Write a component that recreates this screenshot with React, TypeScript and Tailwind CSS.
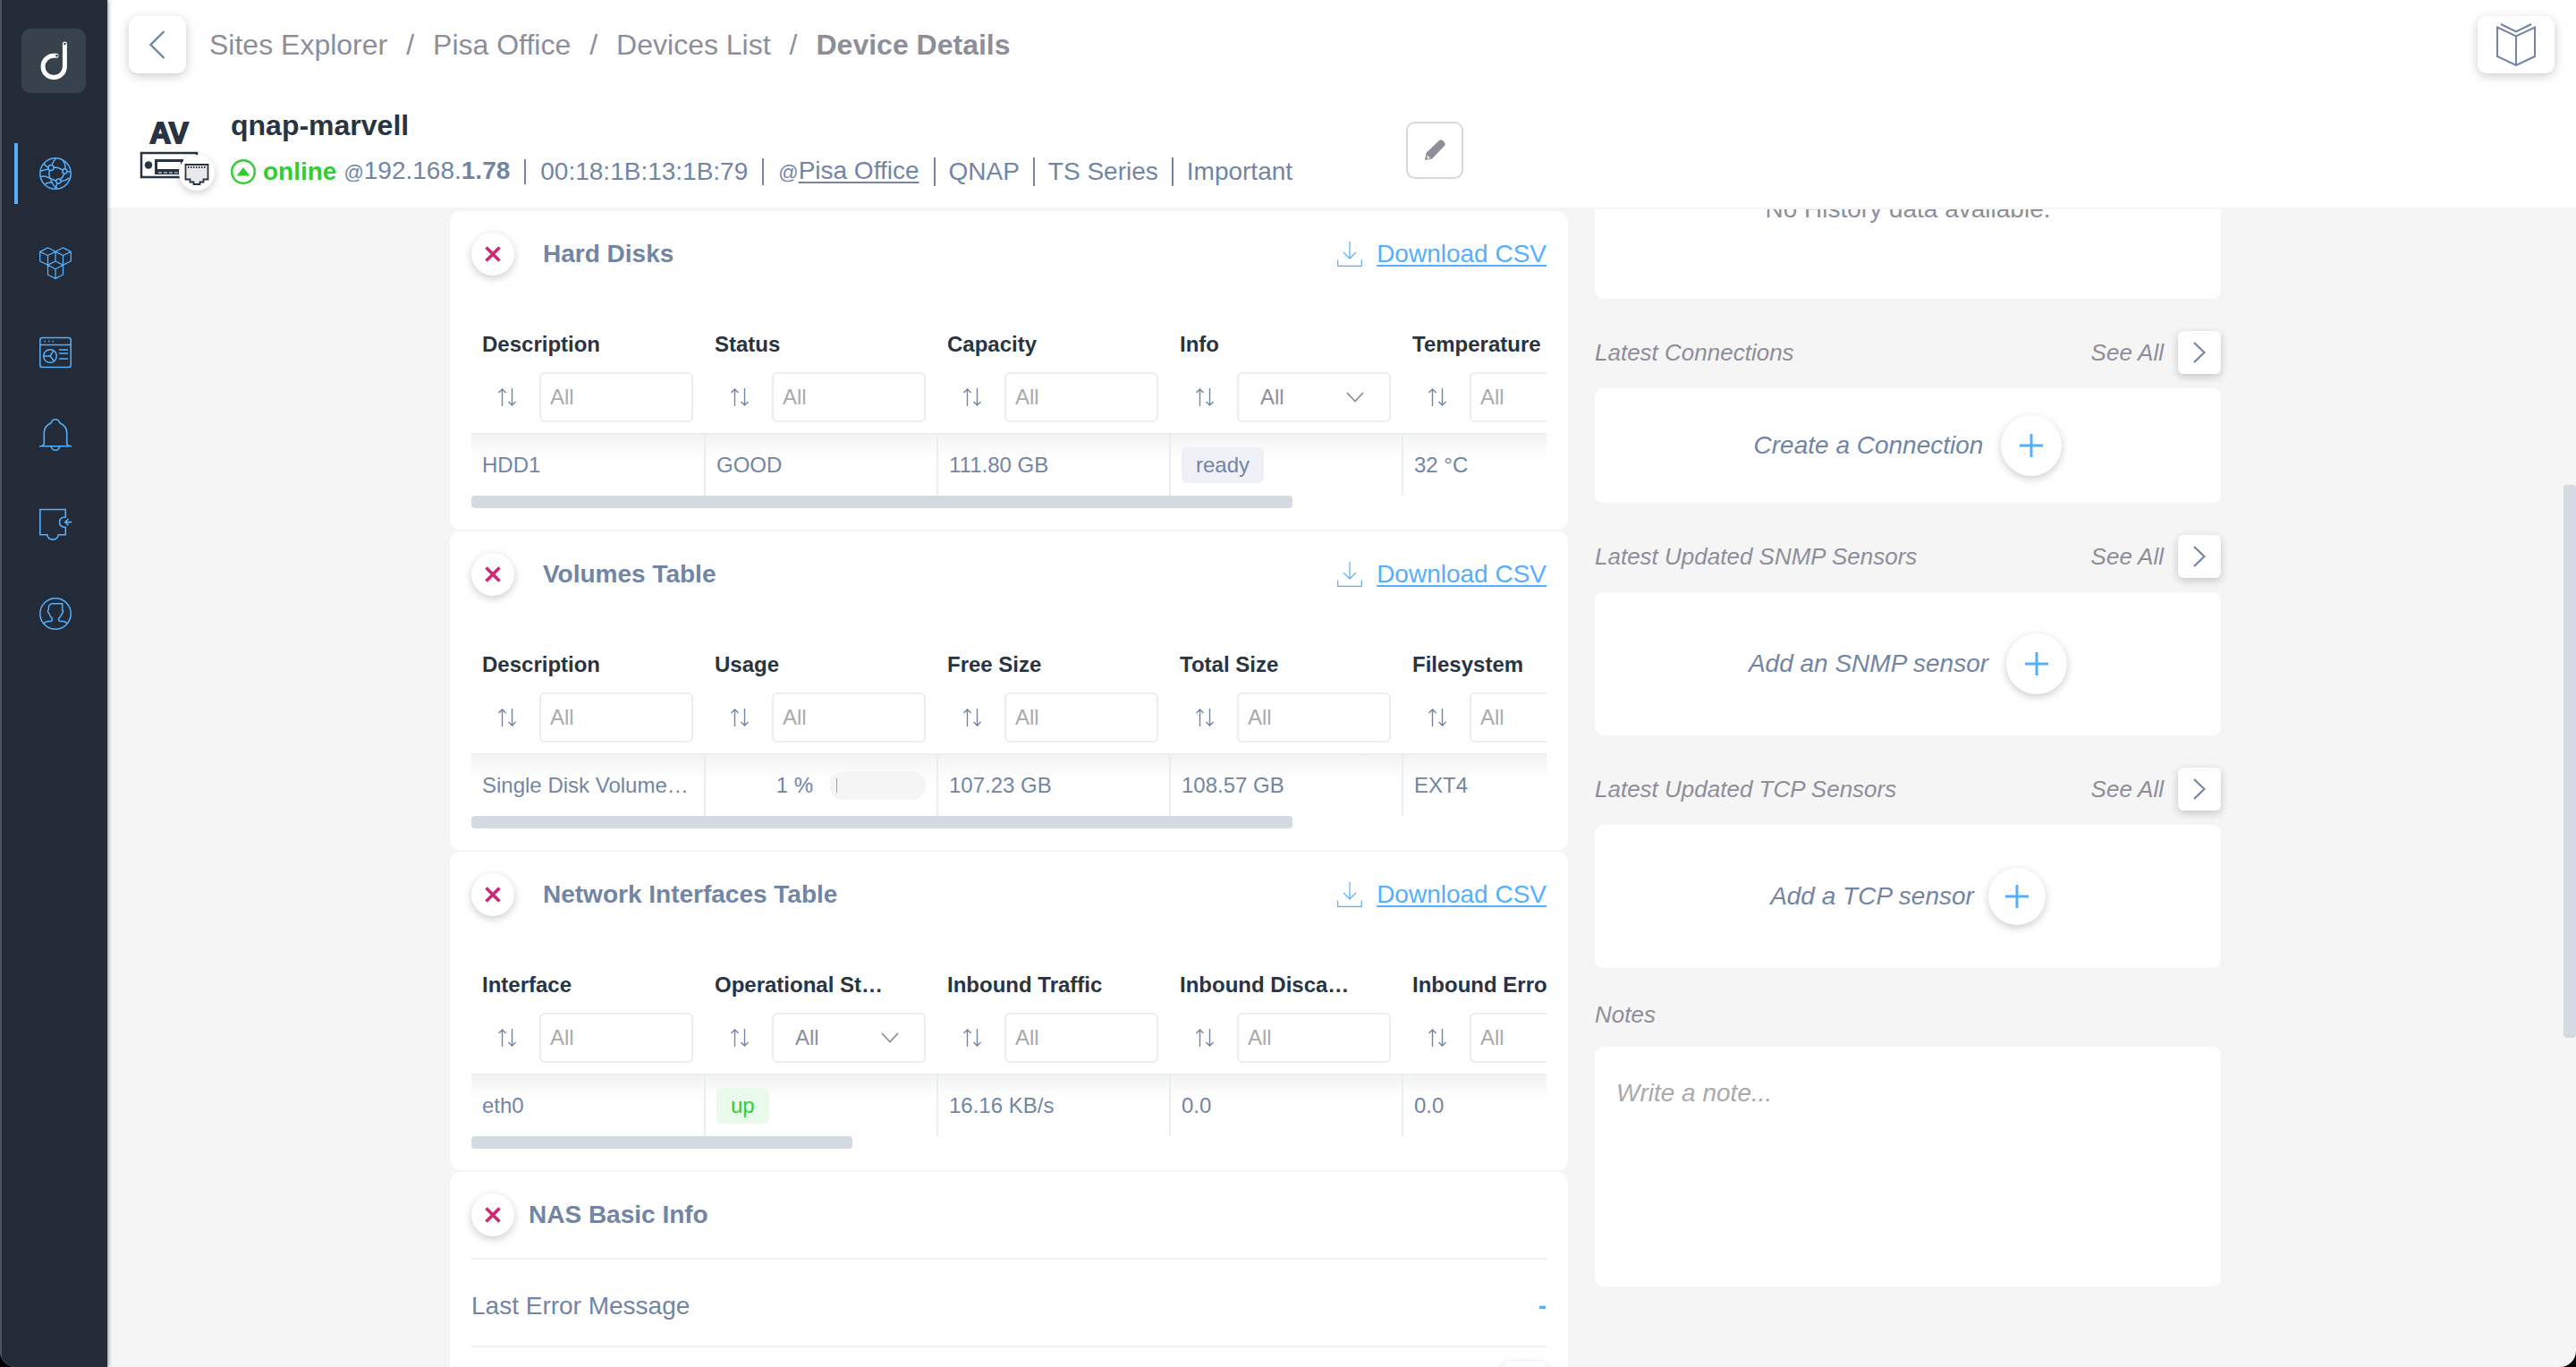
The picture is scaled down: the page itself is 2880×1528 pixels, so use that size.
// Device details page

import React from 'react';

interface Column {
  title: string;
  filter?: 'text' | 'select';
}

interface TableCardProps {
  title: string;
  columns: Column[];
  cells: React.ReactNode[];
  // width of the scroll thumb, in percent of the table
  thumb: number;
}

const Sidebar: React.FC = () => {
  const iconClass = 'h-9 w-9 fill-none stroke-[#54b0ff]';

  return (
    <aside className="relative z-10 w-30 shrink-0 border-l-2 border-[#4b545e] bg-[#222b37] shadow-[1px_0_4px_rgba(0,0,0,0.45)]">
      <a href="#home" aria-label="Home" className="mt-8 ml-[22px] flex h-18 w-18 rounded-[10px] bg-[#38424d]">
        <svg viewBox="0 0 72 72" className="h-18 w-18 fill-none">
          <path d="M39 30.2H36.2a12.2 12.2 0 1 0 12.2 12.2V17" stroke="#fff" strokeWidth="5" strokeLinecap="round" />
          <circle cx="39.4" cy="30.2" r="1.3" fill="#38424d" />
          <circle cx="48.4" cy="17" r="1.3" fill="#38424d" />
        </svg>
      </a>

      <nav className="mt-14 flex flex-col gap-6">
        <div className="flex flex-col gap-8">
          <a href="#sites" aria-label="Sites" className="ml-[14px] flex h-17 items-center border-l-4 border-[#54b0ff] pl-6">
            <svg viewBox="0 0 36 36" className={iconClass} strokeWidth="1.5">
              <circle cx="18" cy="18" r="17.2" />
              <circle cx="13" cy="11.6" r="3" />
              <circle cx="28.4" cy="15.4" r="2.6" />
              <circle cx="21.4" cy="26.6" r="2.6" />
              <path d="M18.5 1C16 3.5 14.6 6 14 8.7M16 11c4 0 7 1 9.800 3M26 3c2.500 3 3.400 6 3 9.800M5 7c1.500 2 3 3.300 5 4.200M11.400 14.100C10.400 18 11 22 13 25.500c1.500 3.500 3.500 7 6 9.500M1 21.500c3.500-1 7-.5 10 1.500l7.800 3.300M28 18c-1 2.500-2.500 4.700-4.600 6.600M24 26.800c3.500-.2 6.500-1.600 9.500-4M20 29c-1.200 2-1.400 4-.8 6M1.200 15.500C4.500 14 8 13 10.400 12.900M31 15.500l4 .8M6 30c2-1.500 5-2 8-2.200" />
            </svg>
          </a>
          <a href="#integrations" aria-label="Integrations" className="ml-[42px] flex h-17 items-center">
            <svg viewBox="0 0 36 36" className={iconClass} strokeWidth="1.3" strokeLinejoin="round">
              <path d="M9.500.8L.7 5.300V16l8.800 4.200M.7 5.300l8.800 4.200L18 5.300 9.500.8M9.500 9.500v10.700M18 5.300V16M26.500.8L18 5.300l8.500 4.200 8.800-4.200L26.500.8M35.300 5.300V16l-8.800 4.200M26.500 9.500v10.700M18 16l-8.500 4.200L18 24.800l8.500-4.600L18 16M9.500 20.200V31l8.500 4.300 8.500-4.300V20.200M18 24.800v10.500" />
            </svg>
          </a>
          <a href="#dashboard" aria-label="Dashboard" className="ml-[42px] flex h-17 items-center">
            <svg viewBox="0 0 36 36" className={iconClass} strokeWidth="1.5">
              <rect x="0.8" y="1.5" width="34.4" height="33" rx="2.500" />
              <path d="M.7 9.500h34.600M5.500 5.500h1.500M10 5.500h1.500M14.500 5.500h1.500M22 15h10M22 19h10M22 25h10" />
              <circle cx="12" cy="22" r="7.300" />
              <path d="M4.700 22H12l4-6.200M12 22l4.500 5.800" />
            </svg>
          </a>
        </div>
        <div className="flex flex-col gap-8">
          <a href="#alerts" aria-label="Alerts" className="ml-[42px] flex h-17 items-center">
            <svg viewBox="0 0 36 36" className={iconClass} strokeWidth="1.6">
              <path d="M0 30.700h36M2.800 30.400c1.800-.4 2.500-1.400 2.500-3.400V15.500c0-5 3-8.500 7.800-10.800C14 2.300 15.700.8 18 .8s4 1.500 4.900 3.900c4.800 2.300 7.800 5.800 7.800 10.800V27c0 2 .7 3 2.500 3.400M13.300 30.700a4.700 4.500 0 0 0 9.400 0" />
            </svg>
          </a>
          <a href="#plugins" aria-label="Plugins" className="ml-[42px] flex h-17 items-center">
            <svg viewBox="0 0 36 36" className={iconClass} strokeWidth="1.6">
              <path d="M.8 1.500h28.500v8.500c-4 0-6.800 2-6.800 5.700s2.800 5.500 6.800 5.500v8.500h-8c-.6 3.500-3 5.400-6.300 5.400s-5.700-1.900-6.300-5.400H.8zM36 15.600h-7M32.500 12l-3.700 3.600 3.700 3.600" />
            </svg>
          </a>
          <a href="#profile" aria-label="Profile" className="ml-[42px] flex h-17 items-center">
            <svg viewBox="0 0 36 36" className={iconClass} strokeWidth="1.5">
              <circle cx="18" cy="18" r="17.200" />
              <path d="M5 29.500c1-2 2.500-2.900 5-2.900 4 0 4.500-.2 4.500-3-2-2-3.300-4-3.600-6.100-1.600-1-1.900-2.300-.7-4 0-4 1-6.300 3.800-6.700h11.700v6.700c1.200 1.700 1.300 3-.5 4.500-.5 2.300-1.800 4-3.700 5.600 0 2.800.5 3 4.500 3 2.500 0 4 .9 5 2.900" />
            </svg>
          </a>
        </div>
      </nav>
    </aside>
  );
};

const DeviceIcon: React.FC = () => (
  <svg viewBox="0 0 96 96" className="h-24 w-24 shrink-0 overflow-visible">
    <text x="45" y="40" textAnchor="middle" fontSize="33" fontWeight="700" fill="#283442" stroke="#283442" strokeWidth="1.8" fontFamily='"Liberation Sans Narrow", "Liberation Sans", sans-serif'>
      AV
    </text>
    <rect x="14" y="51" width="62" height="27" fill="#fff" stroke="#283442" strokeWidth="2.500" />
    <circle cx="22" cy="64.500" r="4.200" fill="#283442" />
    <rect x="29" y="58" width="32" height="17" fill="#283442" />
    <rect x="32" y="61" width="26" height="8" fill="#fff" />
    <path d="M33 73h24" stroke="#fff" strokeWidth="1" strokeDasharray="4 2" />
    <circle cx="76" cy="73" r="20" fill="#fff" className="drop-shadow-[0_3px_4px_rgba(0,0,0,0.18)]" />
    <path d="M63.500 64h25v16.500h-5v3h-4v2.500h-7v-2.500h-4v-3h-5z" fill="#e9e9ec" stroke="#283442" strokeWidth="1.800" />
    <path d="M66 67h20" stroke="#283442" strokeWidth="2" strokeDasharray="1.500 1.500" />
  </svg>
);

const Header: React.FC = () => (
  <header className="border-b-2 border-[#f5f5f5] bg-white px-6 pt-[18px] pb-4">
    <div className="flex items-center">
      <button aria-label="Back" className="flex h-16 w-16 items-center justify-center rounded-[10px] bg-white shadow-[0_3px_12px_rgba(0,0,0,0.2)]">
        <svg viewBox="0 0 18 32" className="h-8 w-[18px] fill-none stroke-[#7285a5]" strokeWidth="2.400">
          <path d="M16.500 1L1.500 16l15 15" />
        </svg>
      </button>
      <ol className="ml-[26px] flex gap-[21px] text-[32px] leading-10 text-[#8e8e9b]">
        <li><a href="#sites">Sites Explorer</a></li>
        <li>/</li>
        <li><a href="#pisa">Pisa Office</a></li>
        <li>/</li>
        <li><a href="#devices">Devices List</a></li>
        <li>/</li>
        <li className="font-bold">Device Details</li>
      </ol>
      <button aria-label="Manual" className="ml-auto flex h-16 w-[86px] items-center justify-center rounded-[10px] bg-white shadow-[0_3px_12px_rgba(0,0,0,0.2)]">
        <svg viewBox="0 0 44 48" className="h-12 w-11 fill-none stroke-[#7285a5]" strokeWidth="2">
          <path d="M1 4.500l21 10 21-10V37L22 47 1 37zM22 14.500V47M5 1l17 8.500L39 1" />
        </svg>
      </button>
    </div>

    <div className="mt-[38px] flex items-center">
      <DeviceIcon />
      <div className="ml-[18px] max-w-[1314px] flex-1 self-start">
        <h1 className="text-[32px] leading-10 font-bold text-[#283442]">qnap-marvell</h1>
        <div className="mt-4 flex h-8 items-center text-[28px] leading-8 whitespace-nowrap text-[#7285a5]">
          <svg viewBox="0 0 28 28" className="mr-2 h-7 w-7 fill-none">
            <circle cx="14" cy="14" r="12.800" stroke="#32cd32" strokeWidth="2.400" />
            <path d="M14 9l7.500 9.500h-15z" fill="#32cd32" />
          </svg>
          <span className="mr-2 font-bold text-[#32cd32]">online</span>
          <span className="pr-4">
            <span className="text-[22px]">@</span>192.168.<b>1.78</b>
          </span>
          <span className="border-l-2 border-[#7285a5] px-4 leading-7">00:18:1B:13:1B:79</span>
          <span className="border-l-2 border-[#7285a5] px-4 leading-7">
            <span className="text-[22px]">@</span>
            <a href="#pisa" className="underline decoration-2 underline-offset-3">Pisa Office</a>
          </span>
          <span className="border-l-2 border-[#7285a5] px-[15px]">QNAP</span>
          <span className="border-l-2 border-[#7285a5] px-[15px]">TS Series</span>
          <span className="border-l-2 border-[#7285a5] px-[15px]">Important</span>
        </div>
      </div>
      <button aria-label="Edit device" className="flex h-16 w-16 items-center justify-center rounded-[10px] border-2 border-[#d3dae1]">
        <svg viewBox="0 0 24 24" className="h-6 w-6">
          <path d="M1 23l1.500-8L16.500 1.500a3.300 3.300 0 0 1 4.800 0l1.200 1.200a3.300 3.300 0 0 1 0 4.800L9 21.500z" fill="#8e8e9b" />
          <path d="M3.500 17.500l3.500 3.300-3.200.7z" fill="#fff" />
        </svg>
      </button>
    </div>
  </header>
);

const RemoveButton: React.FC = () => (
  <button aria-label="Remove card" className="flex h-12 w-12 items-center justify-center rounded-full bg-white shadow-[0_3px_10px_rgba(0,0,0,0.2)]">
    <svg viewBox="0 0 18 18" className="h-[18px] w-[18px] stroke-[#d02873]" strokeWidth="3.600">
      <path d="M1.500 1.500l15 15M16.500 1.500l-15 15" />
    </svg>
  </button>
);

const TableCard: React.FC<TableCardProps> = ({ title, columns, cells, thumb }) => (
  <section className="rounded-xl bg-white p-6">
    <div className="flex items-center">
      <RemoveButton />
      <h2 className="ml-8 text-[28px] leading-8 font-bold text-[#7285a5]">{title}</h2>
      <a href="#csv" className="ml-auto flex items-center gap-4 text-[28px] leading-8 text-[#54b0ff]">
        <svg viewBox="0 0 28 28" className="h-7 w-7 fill-none stroke-[#54b0ff]" strokeWidth="1.200">
          <path d="M14 0v19M7 12l7 7 7-7M.7 20.500v6.800h26.600v-6.800" />
        </svg>
        <span className="underline decoration-2 underline-offset-3">Download CSV</span>
      </a>
    </div>

    <div className="mt-15 overflow-hidden">
      <table className="w-[1300px] table-fixed border-separate border-spacing-0 text-left text-2xl">
        <thead>
          <tr>
            {columns.map((column) => (
              <th key={column.title} className="border-b-2 border-[#ebeeee] p-0 px-3 pb-3">
                <div className="leading-[34px] whitespace-nowrap text-[#283442]">{column.title}</div>
                <div className="mt-[14px] flex gap-2 font-normal">
                  <button aria-label={`Sort by ${column.title}`} className="flex h-14 w-14 shrink-0 items-center justify-center">
                    <svg viewBox="0 0 20 20" className="h-5 w-5 fill-none stroke-[#7285a5]" strokeWidth="1.400">
                      <path d="M4.500 20V1M.5 5l4-4 4 4M15.500 0v19M11.500 15l4 4 4-4" />
                    </svg>
                  </button>
                  {column.filter === 'select' ? (
                    <div className="relative min-w-0 flex-1">
                      <select aria-label={`Filter ${column.title}`} className="h-14 w-full appearance-none rounded-md border-2 border-[#ebeeee] bg-white pl-6 text-[#8e8e9b]">
                        <option>All</option>
                      </select>
                      <svg viewBox="0 0 20 12" className="pointer-events-none absolute top-[22px] right-[30px] h-3 w-5 fill-none stroke-[#8e8e9b]" strokeWidth="1.800">
                        <path d="M1 1l9 9.500L19 1" />
                      </svg>
                    </div>
                  ) : (
                    <input
                      type="text"
                      aria-label={`Filter ${column.title}`}
                      placeholder="All"
                      className="h-14 min-w-0 flex-1 rounded-md border-2 border-[#ebeeee] bg-white px-[10px] placeholder:text-[#aaaaaa]"
                    />
                  )}
                </div>
              </th>
            ))}
          </tr>
        </thead>
        <tbody>
          <tr className="bg-linear-to-b from-[#f2f3f3] to-white to-40% text-[#7285a5]">
            {cells.map((cell, i) => (
              <td key={i} className="h-17 border-l-2 border-[#ebeeee] p-0 px-3 leading-8 whitespace-nowrap first:border-l-0">
                {cell}
              </td>
            ))}
          </tr>
        </tbody>
      </table>
    </div>
    <div className="h-[14px] rounded-sm bg-[#d3dae1]" style={{ width: `${thumb}%` }} />
  </section>
);

const Usage: React.FC<{ value: number }> = ({ value }) => (
  <div className="flex items-center justify-end gap-[18px]">
    <span>{value} %</span>
    <div className="h-8 w-27 rounded-full bg-[#f5f5f5] p-2">
      <div className="h-4 bg-[#54b0ff]" style={{ width: `${value}%` }} />
    </div>
  </div>
);

const SideSection: React.FC<{ title: string; children: React.ReactNode }> = ({ title, children }) => (
  <section className="mt-9">
    <div className="mb-4 flex items-center text-[26px] leading-8 text-[#8e8e9b] italic">
      <h2>{title}</h2>
      <span className="ml-auto">See All</span>
      <button aria-label={`See all ${title}`} className="ml-4 flex h-12 w-12 items-center justify-center rounded-md bg-white shadow-[0_3px_10px_rgba(0,0,0,0.2)]">
        <svg viewBox="0 0 14 24" className="h-6 w-[14px] fill-none stroke-[#7285a5]" strokeWidth="2.200">
          <path d="M1 1l11.500 11L1 23" />
        </svg>
      </button>
    </div>
    {children}
  </section>
);

const Plus: React.FC = () => (
  <svg viewBox="0 0 26 26" className="h-[26px] w-[26px] stroke-[#54b0ff]" strokeWidth="3">
    <path d="M13 0v26M0 13h26" />
  </svg>
);

const App: React.FC = () => {
  return (
    <div className="h-screen bg-black font-['Liberation_Sans',Arial,sans-serif]">
      <div className="flex h-full overflow-hidden rounded-b-[18px] bg-[#f5f5f5]">
        <Sidebar />

        <div className="flex min-w-0 flex-1 flex-col">
          <Header />

          <div className="flex min-h-0 flex-1 overflow-hidden">
            <main className="mx-auto flex w-[1980px] items-start gap-[30px]">
              <div className="flex min-w-0 flex-1 flex-col gap-[2px] pt-[2px]">
                <TableCard
                  title="Hard Disks"
                  thumb={76.4}
                  columns={[
                    { title: 'Description' },
                    { title: 'Status' },
                    { title: 'Capacity' },
                    { title: 'Info', filter: 'select' },
                    { title: 'Temperature' },
                  ]}
                  cells={[
                    'HDD1',
                    'GOOD',
                    '111.80 GB',
                    <span className="inline-block rounded-md bg-[#f0f1f6] px-4 py-1">ready</span>,
                    '32 °C',
                  ]}
                />
                <TableCard
                  title="Volumes Table"
                  thumb={76.4}
                  columns={[
                    { title: 'Description' },
                    { title: 'Usage' },
                    { title: 'Free Size' },
                    { title: 'Total Size' },
                    { title: 'Filesystem' },
                  ]}
                  cells={['Single Disk Volume…', <Usage value={1} />, '107.23 GB', '108.57 GB', 'EXT4']}
                />
                <TableCard
                  title="Network Interfaces Table"
                  thumb={35.4}
                  columns={[
                    { title: 'Interface' },
                    { title: 'Operational St…', filter: 'select' },
                    { title: 'Inbound Traffic' },
                    { title: 'Inbound Disca…' },
                    { title: 'Inbound Errors' },
                  ]}
                  cells={[
                    'eth0',
                    <span className="inline-block rounded-md bg-[#eafaea] px-4 py-1 text-[#32cd32]">up</span>,
                    '16.16 KB/s',
                    '0.0',
                    '0.0',
                  ]}
                />

                <section className="rounded-xl bg-white p-6 text-[28px] leading-8 text-[#7285a5]">
                  <div className="flex items-center pb-6">
                    <RemoveButton />
                    <h2 className="ml-4 font-bold">NAS Basic Info</h2>
                  </div>
                  <div className="flex justify-between border-t-2 border-[#f0f1f1] pt-9 pb-7">
                    <span>Last Error Message</span>
                    <span className="font-bold text-[#54b0ff]">-</span>
                  </div>
                  <div className="flex justify-end border-t-2 border-[#f0f1f1] pt-4">
                    <button aria-label="Show chart" className="h-12 w-12 rounded-md bg-white shadow-[0_3px_10px_rgba(0,0,0,0.2)]" />
                  </div>
                </section>
              </div>

              <aside className="-mt-4 w-[700px] shrink-0">
                <div className="h-29 rounded-[10px] bg-white text-center text-[28px] leading-8 text-[#8e8e9b]">
                  No History data available.
                </div>

                <SideSection title="Latest Connections">
                  <div className="flex h-32 items-center justify-center gap-5 rounded-[10px] bg-white text-[28px] text-[#7285a5] italic">
                    <span>Create a Connection</span>
                    <button aria-label="Create a Connection" className="flex h-17 w-17 items-center justify-center rounded-full bg-white shadow-[0_3px_10px_rgba(0,0,0,0.2)]">
                      <Plus />
                    </button>
                  </div>
                </SideSection>

                <SideSection title="Latest Updated SNMP Sensors">
                  <div className="flex h-40 items-center justify-center gap-5 rounded-[10px] bg-white text-[28px] text-[#7285a5] italic">
                    <span>Add an SNMP sensor</span>
                    <button aria-label="Add an SNMP sensor" className="flex h-17 w-17 items-center justify-center rounded-full bg-white shadow-[0_3px_10px_rgba(0,0,0,0.2)]">
                      <Plus />
                    </button>
                  </div>
                </SideSection>

                <SideSection title="Latest Updated TCP Sensors">
                  <div className="flex h-40 items-center justify-center gap-4 rounded-[10px] bg-white text-[28px] text-[#7285a5] italic">
                    <span>Add a TCP sensor</span>
                    <button aria-label="Add a TCP sensor" className="flex h-16 w-16 items-center justify-center rounded-full bg-white shadow-[0_3px_10px_rgba(0,0,0,0.2)]">
                      <Plus />
                    </button>
                  </div>
                </SideSection>

                <label htmlFor="notes" className="mt-9 block text-[26px] leading-8 text-[#8e8e9b] italic">Notes</label>
                <textarea
                  id="notes"
                  placeholder="Write a note..."
                  className="mt-5 block h-67 w-full resize-none rounded-[10px] bg-white px-6 pt-9 text-[28px] leading-8 italic placeholder:text-[#aaaaaa]"
                />
              </aside>
            </main>

            {/* Page scroll thumb */}
            <div className="w-[14px] shrink-0">
              <div className="mt-77 h-[618px] rounded-sm bg-[#d3dae1]" />
            </div>
          </div>
        </div>
      </div>
    </div>
  );
};

export default App;
